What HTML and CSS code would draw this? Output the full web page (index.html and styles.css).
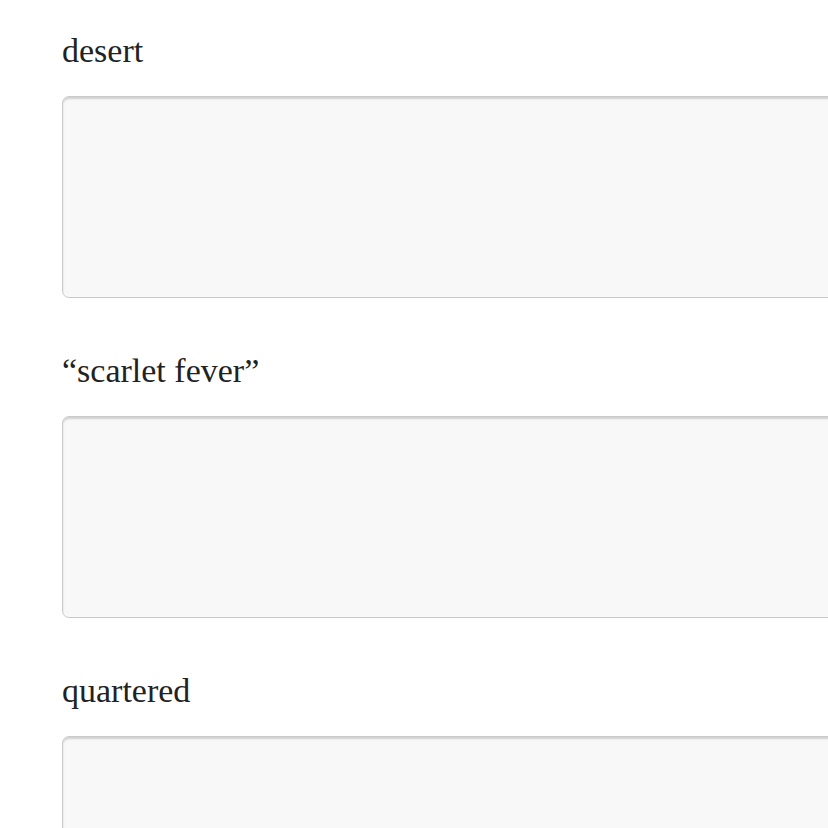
FILE: index.html
```html
<!DOCTYPE html>
<html>
<head>
<meta charset="utf-8">
<link rel="stylesheet" href="styles.css">
</head>
<body>
<div class="form">
  <div class="field">
    <label class="label" for="a">desert</label>
    <textarea class="box" id="a"></textarea>
  </div>
  <div class="field">
    <label class="label" for="b">“scarlet fever”</label>
    <textarea class="box" id="b"></textarea>
  </div>
  <div class="field">
    <label class="label" for="c">quartered</label>
    <textarea class="box" id="c"></textarea>
  </div>
</div>
</body>
</html>
```
FILE: styles.css
```css
html, body {
  margin: 0;
  padding: 0;
  background: #fff;
  overflow: hidden;
}
.form {
  padding: 32px 0 0 62px;
  display: flex;
  flex-direction: column;
  gap: 54px;
  width: 900px;
}
.field {
  display: flex;
  flex-direction: column;
  gap: 26px;
}
.label {
  font-family: "Liberation Serif", "Times New Roman", serif;
  font-size: 34px;
  line-height: 38px;
  color: #222;
}
.box {
  display: block;
  box-sizing: border-box;
  width: 900px;
  height: 202px;
  margin: 0;
  padding: 0;
  resize: none;
  background: #f8f8f8;
  border: 1px solid #cacaca;
  border-radius: 7px;
  box-shadow: inset 0 2px 2px rgba(0,0,0,0.16);
  outline: none;
}
```
